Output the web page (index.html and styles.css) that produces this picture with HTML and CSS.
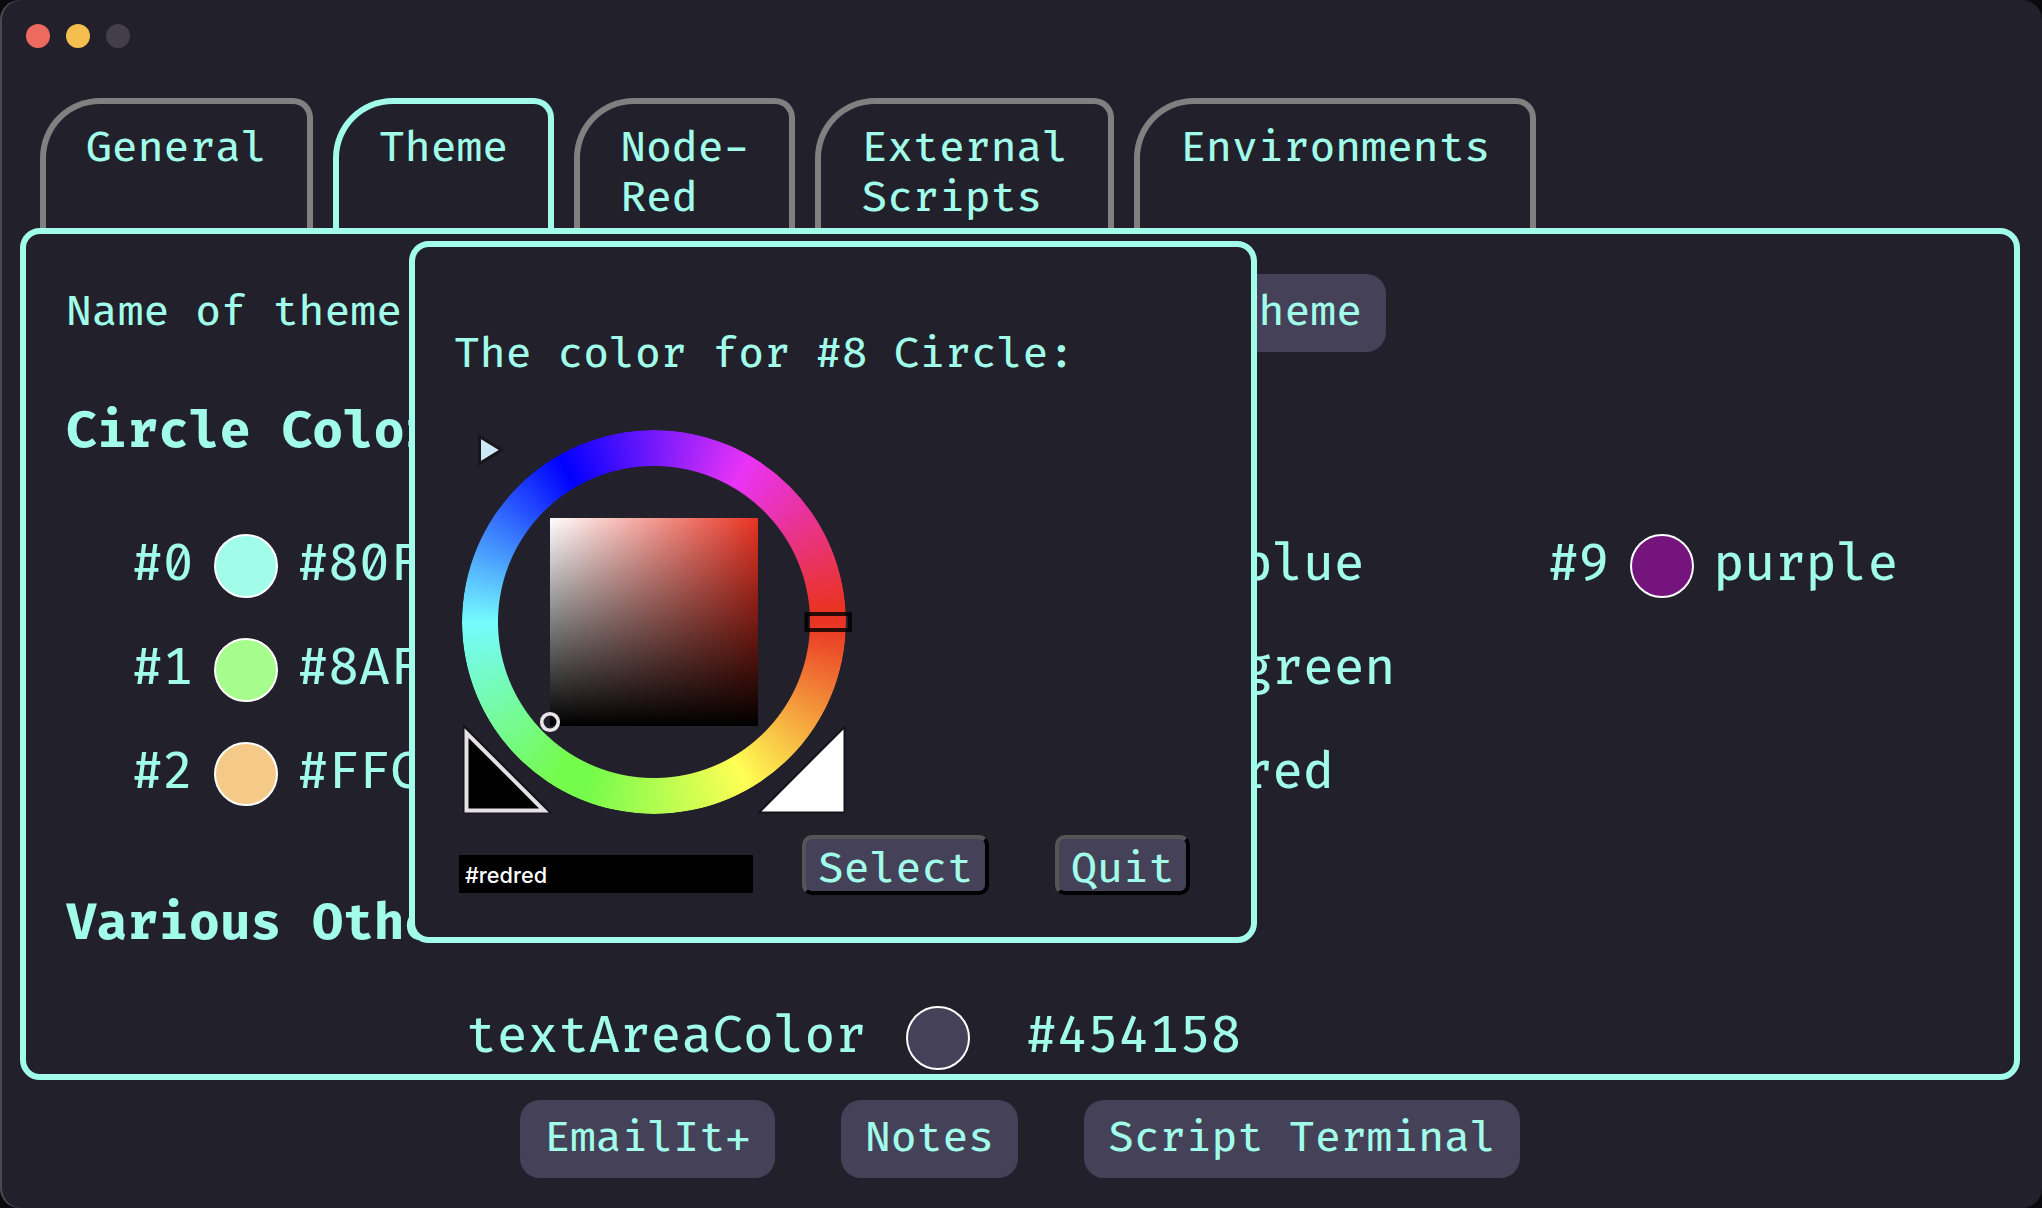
FILE: index.html
```html
<!DOCTYPE html>
<html lang="en">
<head>
<meta charset="utf-8">
<title>Preferences</title>
<link rel="stylesheet" href="styles.css">
</head>
<body>
<div class="window">
  <header class="titlebar">
    <span class="light light-close"></span>
    <span class="light light-minimize"></span>
    <span class="light light-zoom"></span>
  </header>
  <nav class="tabs">
    <div class="tab">General</div>
    <div class="tab tab-active">Theme</div>
    <div class="tab">Node-<br>Red</div>
    <div class="tab">External<br>Scripts</div>
    <div class="tab">Environments</div>
  </nav>
  <main class="panel">
    <div class="name-row">
      <span class="name-label">Name of theme:</span>
      <span class="button">Save Theme</span>
    </div>
    <h2 class="heading">Circle Colors</h2>
    <div class="circles">
      <div class="swatch-column">
        <div class="swatch"><span>#0</span><i class="dot dot-aqua"></i><span>#80FFEA</span></div>
        <div class="swatch"><span>#1</span><i class="dot dot-lime"></i><span>#8AFF80</span></div>
        <div class="swatch"><span>#2</span><i class="dot dot-peach"></i><span>#FFCA80</span></div>
      </div>
      <div class="swatch-column swatch-column-third">
        <div class="swatch"><span>#6</span><i class="dot dot-blue"></i><span>blue</span></div>
        <div class="swatch"><span>#7</span><i class="dot dot-green"></i><span>green</span></div>
        <div class="swatch"><span>#8</span><i class="dot dot-red"></i><span>red</span></div>
      </div>
      <div class="swatch-column">
        <div class="swatch"><span>#9</span><i class="dot dot-purple"></i><span>purple</span></div>
      </div>
    </div>
    <h2 class="heading heading-other">Various Other Colors</h2>
    <div class="other-row"><span>textAreaColor</span><i class="dot dot-slate"></i><span>#454158</span></div>
  </main>
  <footer class="actions">
    <span class="button">EmailIt+</span>
    <span class="button">Notes</span>
    <span class="button">Script Terminal</span>
  </footer>
  <section class="dialog">
    <p class="dialog-title">The color for #8 Circle:</p>
    <div class="picker">
      <div class="wheel"></div>
      <div class="shade"></div>
      <svg class="markers" viewBox="0 0 400 400" width="400" height="400">
        <path d="M25.500 14.500V41.500L47.500 28Z" fill="#cce9f5" stroke="#17161c" stroke-width="3"/>
        <path d="M10 304V390.500H96.500Z" fill="#15141a" stroke="#15141a" stroke-width="2"/>
        <path d="M12.500 311V388.500H90Z" fill="#000" stroke="#e3e1e3" stroke-width="4"/>
        <path d="M390.500 305V390.500H305Z" fill="#fff" stroke="#15141a" stroke-width="2"/>
        <rect x="352.500" y="192" width="43.500" height="16" fill="none" stroke="#000" stroke-opacity=".82" stroke-width="4"/>
        <circle cx="96" cy="300" r="8.300" fill="none" stroke="#e8e6e8" stroke-width="3.600"/>
      </svg>
    </div>
    <div class="dialog-controls">
      <span class="hex-input">#redred</span>
      <span class="dialog-button">Select</span>
      <span class="dialog-button">Quit</span>
    </div>
  </section>
</div>
</body>
</html>
```
FILE: styles.css
```css
* { box-sizing: border-box; }

body {
  margin: 0;
  background: #0b0b0e;
  color: #a1fce9;
  font: 450 42px/50px "Fira Code", "DejaVu Sans Mono", monospace;
  white-space: nowrap;
}

.window {
  position: relative;
  display: flex;
  flex-direction: column;
  width: 2042px;
  height: 1208px;
  overflow: hidden;
  background: #22202a;
  border-radius: 20px;
  box-shadow: inset 2px 0 0 #4b4a52;
}

.titlebar {
  display: flex;
  gap: 16px;
  height: 98px;
  padding: 24px 0 0 26px;
}

.light { width: 24px; height: 24px; border-radius: 50%; }
.light-close { background: #ed6a5e; }
.light-minimize { background: #f5bf4f; }
.light-zoom { background: #423f4a; }

.tabs {
  display: flex;
  gap: 20px;
  height: 130px;
  padding-left: 40px;
}

.tab {
  padding: 19px 40px 0;
  border: 6px solid #808080;
  border-bottom: 0;
  border-radius: 60px 20px 0 0;
}
.tab-active { border-color: #a1fce9; }

.panel {
  width: 2000px;
  height: 852px;
  margin-left: 20px;
  padding: 40px 40px 0;
  border: 6px solid #a1fce9;
  border-radius: 20px;
  overflow: hidden;
}

.name-row {
  display: flex;
  justify-content: space-between;
  align-items: center;
  width: 1320px;
}
.name-label { margin-top: -2px; }

.button {
  height: 78px;
  padding: 13px 24px 0;
  border-radius: 20px;
  background: #454158;
}

.heading {
  margin: 50px 0 0;
  font-size: 50px;
  line-height: 60px;
}

.circles {
  display: grid;
  grid-template-columns: repeat(4, 472px);
  height: 312px;
  margin-top: 52px;
  padding-left: 66px;
}
.swatch-column-third { grid-column: 3; }

.swatch {
  display: flex;
  align-items: center;
  height: 104px;
  gap: 20px;
  font-size: 50px;
}
.swatch span, .other-row span { margin-top: -3px; }

.dot {
  flex: none;
  width: 64px;
  height: 64px;
  border: 2px solid #fff;
  border-radius: 50%;
}
.dot-aqua { background: #a1fce9; }
.dot-lime { background: #a6fc8d; }
.dot-peach { background: #f5ca89; }
.dot-blue { background: #0000ff; }
.dot-green { background: #008000; }
.dot-red { background: #ff0000; }
.dot-purple { background: #75147c; }
.dot-slate { background: #454158; }

.heading-other { margin-top: 68px; }

.other-row {
  display: flex;
  align-items: center;
  height: 64px;
  margin-top: 52px;
  padding-left: 400px;
  font-size: 50px;
}
.other-row .dot { margin: 0 56px 0 40px; }

.actions {
  display: flex;
  justify-content: center;
  gap: 66px;
  width: 2040px;
  padding-top: 20px;
}

/* Colour picker, opened on top of the theme panel */
.dialog {
  position: absolute;
  left: 409px;
  top: 241px;
  width: 848px;
  height: 702px;
  padding: 82px 40px 0 39px;
  border: 6px solid #a1fce9;
  border-radius: 20px;
  background: #22202a;
}
.dialog-title { margin: 0; }

.picker {
  position: relative;
  display: grid;
  place-items: center;
  width: 400px;
  height: 400px;
  margin-top: 43px;
}
.wheel, .shade, .markers { grid-area: 1 / 1; }
.wheel {
  width: 384px;
  height: 384px;
  border-radius: 50%;
  background: conic-gradient(from 90deg, #e93323, #ffff54 60deg, #75fb4c 112deg, #75fb4c 122deg, #75fbfd 180deg, #0000ff 240deg, #e933f7 300deg, #e93323 355deg);
  -webkit-mask: radial-gradient(circle, transparent 155.5px, #000 156.5px);
  mask: radial-gradient(circle, transparent 155.5px, #000 156.5px);
}
.shade {
  width: 208px;
  height: 208px;
  background: linear-gradient(transparent, #000), linear-gradient(to right, #fff, #e93323);
}
.markers { position: relative; }

.dialog-controls {
  display: flex;
  margin: 13px 0 0 5px;
}
.hex-input {
  width: 294px;
  height: 38px;
  margin: 20px 49px 0 0;
  padding-left: 6px;
  background: #000;
  color: #fff;
  font: 500 21.7px/40px Inter, "Liberation Sans", sans-serif;
}
.dialog-button {
  height: 60px;
  padding: 1px 12px 0;
  border: 4px solid;
  border-color: #555 #000 #000 #555;
  border-radius: 10px;
  background: #454158;
  line-height: 58px;
}
.dialog-button + .dialog-button { margin-left: 66px; }
```
